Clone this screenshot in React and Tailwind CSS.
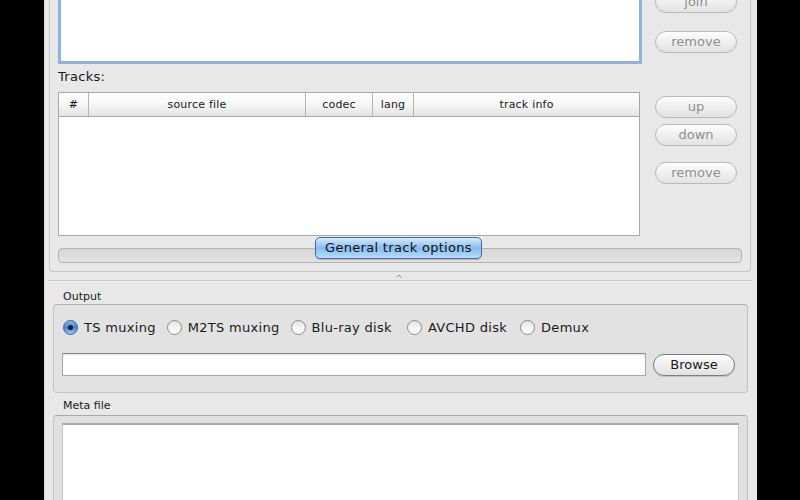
const font = { fontFamily: '"DejaVu Sans", "Liberation Sans", sans-serif' };

function AquaButton({ children, disabled, className = '' }) {
    return (
        <div
            className={`h-[22px] w-[82px] rounded-full border flex items-center justify-center text-[13px] leading-none bg-gradient-to-b from-[#fdfdfd] via-[#efefef] to-[#e2e2e2] ${disabled ? 'border-[#b9b9b9] text-[#8f8f8f]' : 'border-[#7d7d7d] text-[#1a1a1a] shadow-[0_1px_1px_rgba(0,0,0,0.15)]'} ${className}`}
        >
            <span className="-mt-[1px]">{children}</span>
        </div>
    );
}

function Radio({ label, checked, className = '' }) {
    return (
        <div className={`flex items-center gap-[6px] ${className}`}>
            {checked ? (
                <div className="w-[15px] h-[15px] rounded-full border border-[#3d5f8f] bg-gradient-to-b from-[#8bbbec] via-[#3f82d6] to-[#a0cdf8] flex items-center justify-center">
                    <div className="w-[5px] h-[5px] rounded-full bg-[#1a1a1a]"></div>
                </div>
            ) : (
                <div className="w-[15px] h-[15px] rounded-full border border-[#8a8a8a] bg-gradient-to-b from-[#e2e2e2] via-[#f4f4f4] to-[#ffffff]"></div>
            )}
            <span className="text-[13px] tracking-[0.3px] text-[#1a1a1a] leading-none">{label}</span>
        </div>
    );
}

export default function App() {
    const cols = [
        { name: '#', w: 'w-[30px]' },
        { name: 'source file', w: 'w-[217px]' },
        { name: 'codec', w: 'w-[67px]' },
        { name: 'lang', w: 'w-[41px]' },
        { name: 'track info', w: 'flex-1' },
    ];

    return (
        <div className="w-[800px] h-[500px] bg-black overflow-hidden flex" style={font}>
            <div className="ml-[44px] w-[713px] h-full bg-[#e8e8e8] border-l border-[#d2d2d2] flex flex-col">
                {/* upper panel */}
                <div className="ml-[4px] w-[702px] border border-t-0 border-[#c6c6c6] rounded-b-[4px] pl-[8px] pr-[8px] pb-[8px]">
                    <div className="flex h-[64px]">
                        <div className="w-[584px] h-full bg-white border-[3px] border-t-0 border-[#8fb3e0]"></div>
                        <div className="ml-[13px] flex flex-col -mt-[9px]">
                            <AquaButton disabled>join</AquaButton>
                            <AquaButton disabled className="mt-[18px]">remove</AquaButton>
                        </div>
                    </div>
                    <div className="h-[28px] pt-[5px] text-[13px] leading-[16px] tracking-[0.3px] text-[#1a1a1a]">Tracks:</div>
                    <div className="flex h-[144px]">
                        <div className="w-[582px] h-full border border-[#a8a8a8] bg-white flex flex-col">
                            <div className="flex h-[24px] border-b border-[#a8a8a8] bg-gradient-to-b from-[#ffffff] via-[#f6f6f6] to-[#e4e4e4]">
                                {cols.map((c, i) => (
                                    <div
                                        key={c.name}
                                        className={`${c.w} flex items-center justify-center pt-[2px] text-[11px] tracking-[0.2px] text-[#1a1a1a] ${i < cols.length - 1 ? 'border-r border-[#b4b4b4]' : ''}`}
                                    >
                                        {c.name}
                                    </div>
                                ))}
                            </div>
                            <div className="flex-1"></div>
                        </div>
                        <div className="ml-[15px] flex flex-col pt-[4px]">
                            <AquaButton disabled>up</AquaButton>
                            <AquaButton disabled className="mt-[6px]">down</AquaButton>
                            <AquaButton disabled className="mt-[16px]">remove</AquaButton>
                        </div>
                    </div>
                    <div className="relative h-[26px] mt-[1px]">
                        <div className="absolute left-0 right-0 bottom-0 h-[15px] rounded-[4px] border border-[#b4b4b4] bg-gradient-to-b from-[#d6d6d6] to-[#e2e2e2]"></div>
                        <div className="relative ml-[257px] w-[167px] h-[22px] rounded-[5px] border border-[#4b6b9a] bg-gradient-to-b from-[#d6eafc] via-[#86bdf0] to-[#b5dcfc] flex items-center justify-center text-[13px] tracking-[0.3px] text-[#111] shadow-[0_1px_1px_rgba(0,0,0,0.2)]">
                            General track options
                        </div>
                    </div>
                </div>

                {/* splitter */}
                <div className="h-[8px] flex justify-center items-start pt-[2px]">
                    <svg width="6" height="4" viewBox="0 0 6 4" className="mr-[4px]">
                        <path d="M0.5 3.5 L3 1 L5.5 3.5" stroke="#8a8a8a" strokeWidth="1" fill="none" />
                    </svg>
                </div>
                <div className="ml-[3px] w-[704px] h-[1px] bg-[#cacaca]"></div>
                <div className="ml-[3px] w-[704px] h-[1px] bg-[#f4f4f4]"></div>

                {/* output */}
                <div className="h-[22px] pt-[8px] pl-[18px] text-[11px] leading-[14px] text-[#1a1a1a]">Output</div>
                <div className="ml-[8px] w-[695px] h-[89px] border border-[#c2c2c2] border-t-[#b0b0b0] rounded-[4px] bg-[#e2e2e2] pt-[12px]">
                    <div className="h-[20px] flex items-center pl-[9px]">
                        <Radio label="TS muxing" checked />
                        <Radio label="M2TS muxing" className="ml-[11px]" />
                        <Radio label="Blu-ray disk" className="ml-[11px]" />
                        <Radio label="AVCHD disk" className="ml-[15px]" />
                        <Radio label="Demux" className="ml-[13px]" />
                    </div>
                    <div className="flex items-center mt-[16px] pl-[8px]">
                        <div className="w-[584px] h-[23px] bg-white border border-[#a6a6a6] border-t-[#8c8c8c] shadow-[inset_0_1px_1px_rgba(0,0,0,0.12)]"></div>
                        <AquaButton className="ml-[7px] w-[80px]">Browse</AquaButton>
                    </div>
                </div>

                {/* meta file */}
                <div className="h-[22px] pt-[6px] pl-[18px] text-[11px] leading-[14px] text-[#1a1a1a]">Meta file</div>
                <div className="ml-[8px] w-[695px] flex-1 border border-b-0 border-[#c2c2c2] border-t-[#a8a8a8] rounded-t-[4px] bg-[#e0e0e0] pt-[7px] pl-[8px]">
                    <div className="w-[677px] h-full bg-white border border-b-0 border-[#c4c4c4] border-t-[#a8a8a8] border-t-2"></div>
                </div>
            </div>
        </div>
    );
}
